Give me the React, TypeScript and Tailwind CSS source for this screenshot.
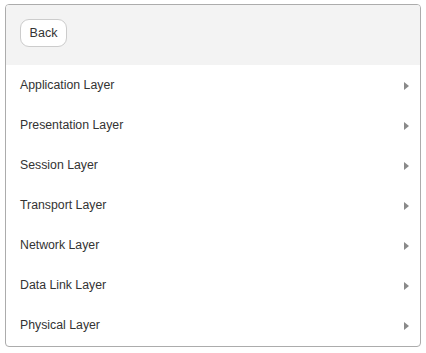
const layers = [
  'Application Layer',
  'Presentation Layer',
  'Session Layer',
  'Transport Layer',
  'Network Layer',
  'Data Link Layer',
  'Physical Layer',
]

export default function App() {
  return (
    <div className="w-[426px] h-[353px] bg-white pt-1 pl-[5px] font-['Liberation_Sans',Arial,sans-serif]">
      <div className="w-[416px] h-[343px] border border-[#acacac] rounded-[4px] overflow-hidden flex flex-col">
        {/* Header */}
        <div className="h-[60px] bg-[#f3f3f3] px-[14px] pt-[14px]">
          <button className="h-[28px] w-[47px] bg-white border border-[#cccccc] rounded-[9px] text-[12.5px] text-[#333] leading-none">
            Back
          </button>
        </div>

        {/* Rows */}
        <ul className="flex flex-col">
          {layers.map((name) => (
            <li key={name} className="h-[40px] flex items-center justify-between pl-[14px] pr-[11px]">
              <span className="text-[12.3px] text-[#333]">{name}</span>
              <svg width="5" height="8" viewBox="0 0 5 8" className="mt-[2px]">
                <path d="M0 0 L5 4 L0 8 Z" fill="#8a8a8a" />
              </svg>
            </li>
          ))}
        </ul>
      </div>
    </div>
  )
}
